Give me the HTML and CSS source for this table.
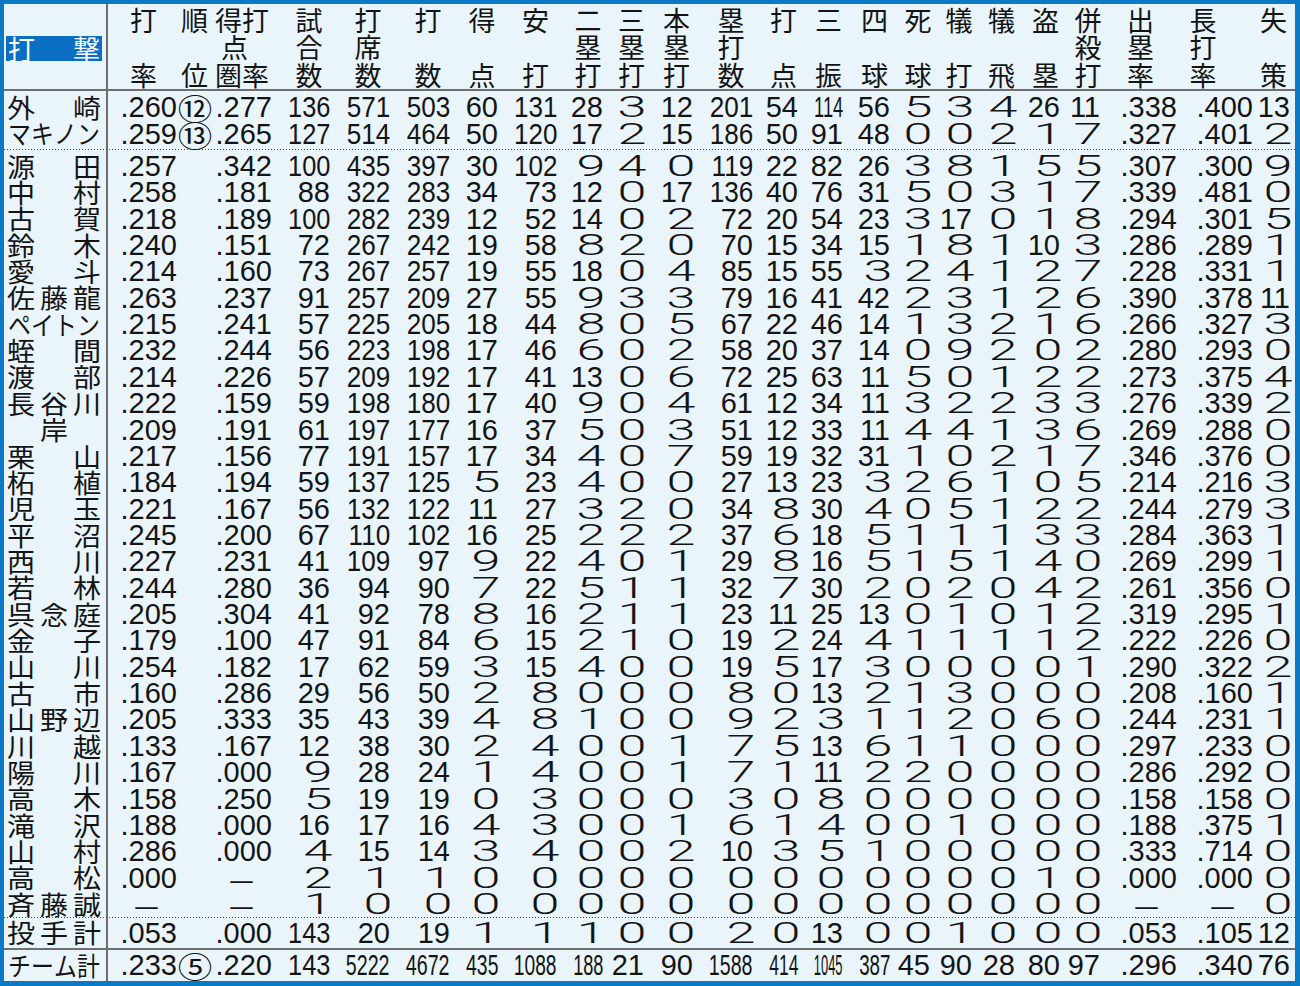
FILE: index.html
```html
<!DOCTYPE html>
<html lang="ja">
<head>
<meta charset="utf-8">
<title>打撃成績</title>
<link rel="stylesheet" href="styles.css">
</head>
<body>
<div class="board">
  <div class="head" id="head">
    <div class="hname"><div class="label"><span>打</span><span>撃</span></div></div>
  </div>
  <div class="rule"></div>
  <div class="grp g1" id="g1"></div>
  <div class="sep s1"></div>
  <div class="grp" id="g2"></div>
  <div class="sep s2"></div>
  <div class="grp" id="g3"></div>
  <div class="rule r2"></div>
  <div class="grp" id="g4"></div>
</div>
<script src="app.js"></script>
</body>
</html>
```

FILE: styles.css
```css
* { box-sizing: border-box; margin: 0; padding: 0; }
:root {
  --cols: 104px 71px 31px 64px 58px 60px 60px 48px 59px 46px 41px 49px 60px 45px 45px 47px 40px 42px 43px 45px 40px 77px 76px 37px;
  --line: #6e6e6e;
  --bg: #eaf4fb;
}
html, body { width: 1300px; height: 986px; overflow: hidden; background: var(--bg); }
.board {
  width: 1300px;
  height: 986px;
  border-style: solid;
  border-color: #0b79c6;
  border-width: 4px 5px 5px 4px;
  background: linear-gradient(var(--line), var(--line)) 102px 0 / 2px 100% no-repeat, var(--bg);
  color: #141414;
  display: flex;
  flex-direction: column;
}
.board > * { flex-shrink: 0; }

.head { display: grid; grid-template-columns: var(--cols); height: 85px; }
.hname { display: flex; align-items: center; padding: 4px 6px 0 2px; }
.label {
  flex: 1;
  display: flex;
  justify-content: space-between;
  background: #0a6fc2;
  color: #fff;
  padding: 0 2px;
  font: 27px/25px "Noto Sans CJK JP", sans-serif;
  height: 25px;
}
.hc {
  display: flex;
  flex-direction: column;
  align-items: center;
  padding-top: 2px;
  font: 27px/27.3px "Noto Sans CJK JP", sans-serif;
  white-space: nowrap;
}
.hc.sr { padding-left: 12px; }
.hc.sl { padding-right: 28px; }
.hl { height: 27.3px; }
.hl.off { padding-right: 15px; }

.rule { height: 2px; background: var(--line); }
.rule.r2 { margin: 2.4px 0 1.6px; }
.g1 { padding-top: 3px; }
.sep { display: flex; flex-direction: column; }
.sep::before {
  content: "";
  height: 1.2px;
  background: repeating-linear-gradient(90deg, #4a4a4a 0 1.3px, transparent 1.3px 3px);
}
.s1 { height: 5.9px; padding-top: 2px; }
.s2 { height: 2.2px; }

.row { display: grid; grid-template-columns: var(--cols); height: 26.36px; align-items: center; }
.nm {
  display: flex;
  justify-content: space-between;
  padding: 0 8px 2px 4px;
  font: 26px/25px "Noto Sans CJK JP", sans-serif;
  white-space: nowrap;
}
.nm span { display: inline-block; width: 26px; transform: scaleX(1.08); text-align: center; }
.nm.one { justify-content: center; }
.nm.four span { display: flex; justify-content: center; width: 23px; transform: scaleX(0.88); }
.c {
  display: flex;
  justify-content: flex-end;
  align-items: center;
  height: 26.36px;
  padding-right: 2px;
  white-space: nowrap;
  font: 29px/26.36px "Liberation Sans", Arial, sans-serif;
}
.c.cc { justify-content: center; padding: 0; }
.ni, .dec { display: inline-block; flex-shrink: 0; transform-origin: 100% 50%; }
.n1 {
  display: inline-block;
  flex-shrink: 0;
  font-family: Roboto, "Liberation Sans", sans-serif;
  font-weight: 300;
  transform: scaleX(1.8);
  margin: 0 4px 0 8px;
}
.circ { display: inline-block; flex-shrink: 0; font: 30px/26px "Noto Sans CJK JP", sans-serif; transform: scaleX(1.15); }
.dash { display: inline-block; font: 28px/26px "Noto Sans CJK JP", sans-serif; margin-right: 18px; }
```

FILE: app.js
```js
(function () {
  var H = [
    ['打', '', '率'], ['順', '', '位'], ['得打', '点', '圏率'], ['試', '合', '数'], ['打', '席', '数'],
    ['打', '', '数'], ['得', '', '点'], ['安', '', '打'], ['二', '塁', '打'], ['三', '塁', '打'],
    ['本', '塁', '打'], ['塁', '打', '数'], ['打', '', '点'], ['三', '', '振'], ['四', '', '球'],
    ['死', '', '球'], ['犠', '', '打'], ['犠', '', '飛'], ['盗', '', '塁'], ['併', '殺', '打'],
    ['出', '塁', '率'], ['長', '打', '率'], ['失', '', '策']
  ];
  var G1 = [
    '外崎|.260 ⑫ .277 136 571 503 60 131 28 3 12 201 54 114 56 5 3 4 26 11 .338 .400 13',
    'マキノン|.259 ⑬ .265 127 514 464 50 120 17 2 15 186 50 91 48 0 0 2 1 7 .327 .401 2'
  ];
  var G2 = [
    '源田|.257 _ .342 100 435 397 30 102 9 4 0 119 22 82 26 3 8 1 5 5 .307 .300 9',
    '中村|.258 _ .181 88 322 283 34 73 12 0 17 136 40 76 31 5 0 3 1 7 .339 .481 0',
    '古賀|.218 _ .189 100 282 239 12 52 14 0 2 72 20 54 23 3 17 0 1 8 .294 .301 5',
    '鈴木|.240 _ .151 72 267 242 19 58 8 2 0 70 15 34 15 1 8 1 10 3 .286 .289 1',
    '愛斗|.214 _ .160 73 267 257 19 55 18 0 4 85 15 55 3 2 4 1 2 7 .228 .331 1',
    '佐藤龍|.263 _ .237 91 257 209 27 55 9 3 3 79 16 41 42 2 3 1 2 6 .390 .378 11',
    'ペイトン|.215 _ .241 57 225 205 18 44 8 0 5 67 22 46 14 1 3 2 1 6 .266 .327 3',
    '蛭間|.232 _ .244 56 223 198 17 46 6 0 2 58 20 37 14 0 9 2 0 2 .280 .293 0',
    '渡部|.214 _ .226 57 209 192 17 41 13 0 6 72 25 63 11 5 0 1 2 2 .273 .375 4',
    '長谷川|.222 _ .159 59 198 180 17 40 9 0 4 61 12 34 11 3 2 2 3 3 .276 .339 2',
    '岸|.209 _ .191 61 197 177 16 37 5 0 3 51 12 33 11 4 4 1 3 6 .269 .288 0',
    '栗山|.217 _ .156 77 191 157 17 34 4 0 7 59 19 32 31 1 0 2 1 7 .346 .376 0',
    '柘植|.184 _ .194 59 137 125 5 23 4 0 0 27 13 23 3 2 6 1 0 5 .214 .216 3',
    '児玉|.221 _ .167 56 132 122 11 27 3 2 0 34 8 30 4 0 5 1 2 2 .244 .279 3',
    '平沼|.245 _ .200 67 110 102 16 25 2 2 2 37 6 18 5 1 1 1 3 3 .284 .363 1',
    '西川|.227 _ .231 41 109 97 9 22 4 0 1 29 8 16 5 1 5 1 4 0 .269 .299 1',
    '若林|.244 _ .280 36 94 90 7 22 5 1 1 32 7 30 2 0 2 0 4 2 .261 .356 0',
    '呉念庭|.205 _ .304 41 92 78 8 16 2 1 1 23 11 25 13 0 1 0 1 2 .319 .295 1',
    '金子|.179 _ .100 47 91 84 6 15 2 1 0 19 2 24 4 1 1 1 1 2 .222 .226 0',
    '山川|.254 _ .182 17 62 59 3 15 4 0 0 19 5 17 3 0 0 0 0 1 .290 .322 2',
    '古市|.160 _ .286 29 56 50 2 8 0 0 0 8 0 13 2 1 3 0 0 0 .208 .160 1',
    '山野辺|.205 _ .333 35 43 39 4 8 1 0 0 9 2 3 1 1 2 0 6 0 .244 .231 1',
    '川越|.133 _ .167 12 38 30 2 4 0 0 1 7 5 13 6 1 1 0 0 0 .297 .233 0',
    '陽川|.167 _ .000 9 28 24 1 4 0 0 1 7 1 11 2 2 0 0 0 0 .286 .292 0',
    '高木|.158 _ .250 5 19 19 0 3 0 0 0 3 0 8 0 0 0 0 0 0 .158 .158 0',
    '滝沢|.188 _ .000 16 17 16 4 3 0 0 1 6 1 4 0 0 1 0 0 0 .188 .375 1',
    '山村|.286 _ .000 4 15 14 3 4 0 0 2 10 3 5 1 0 0 0 0 0 .333 .714 0',
    '高松|.000 _ — 2 1 1 0 0 0 0 0 0 0 0 0 0 0 0 1 0 .000 .000 0',
    '斉藤誠|— _ — 1 0 0 0 0 0 0 0 0 0 0 0 0 0 0 0 0 — — 0'
  ];
  var G3 = ['投手計|.053 _ .000 143 20 19 1 1 1 0 0 2 0 13 0 0 1 0 0 0 .053 .105 12'];
  var G4 = ['チーム計|.233 ⑤ .220 143 5222 4672 435 1088 188 21 90 1588 414 1045 387 45 90 28 80 97 .296 .340 76'];

  function el(tag, cls, text) {
    var e = document.createElement(tag);
    if (cls) e.className = cls;
    if (text != null) e.textContent = text;
    return e;
  }

  var head = document.getElementById('head');
  H.forEach(function (h, i) {
    var cls = 'hc';
    if (i === 21) cls += ' sl';
    else if ([0, 1, 2, 20, 22].indexOf(i) < 0) cls += ' sr';
    var c = el('div', cls);
    h.forEach(function (t, j) {
      c.appendChild(el('div', 'hl' + (i === 2 && j === 1 ? ' off' : ''), t));
    });
    head.appendChild(c);
  });

  function classify(v) {
    if (v === '—') return 'dash';
    if (/^[\u2460-\u2473]$/.test(v)) return 'circ';
    if (/^\d$/.test(v)) return 'n1';
    if (v.charAt(0) === '.') return 'dec';
    return 'ni';
  }

  function build(id, list) {
    var g = document.getElementById(id);
    list.forEach(function (s) {
      var parts = s.split('|');
      var name = Array.from(parts[0]);
      var vals = parts[1].split(/\s+/);
      var row = el('div', 'row');
      var cls = 'nm';
      if (name.length === 1) cls += ' one';
      if (name.length >= 4) cls += ' four';
      var nm = el('div', cls);
      name.forEach(function (ch) { nm.appendChild(el('span', null, ch)); });
      row.appendChild(nm);
      vals.forEach(function (v, i) {
        var c = el('div', 'c' + (i === 1 ? ' cc' : ''));
        if (v !== '_') c.appendChild(el('span', classify(v), v));
        row.appendChild(c);
      });
      g.appendChild(row);
    });
  }
  build('g1', G1);
  build('g2', G2);
  build('g3', G3);
  build('g4', G4);

  function fit() {
    var spans = document.querySelectorAll('.ni, .dec');
    Array.prototype.forEach.call(spans, function (s) {
      var colW = s.parentElement.clientWidth;
      var w = s.offsetWidth;
      var k = 1;
      if (s.classList.contains('ni') && s.textContent.length >= 3) {
        k = Math.min(0.9, (colW - 16) / w);
      } else if (w > colW - 3) {
        k = (colW - 3) / w;
      }
      s.style.transform = k < 1 ? 'scaleX(' + k.toFixed(3) + ')' : '';
    });
  }
  fit();
  if (document.fonts && document.fonts.ready) document.fonts.ready.then(fit);
})();
```
